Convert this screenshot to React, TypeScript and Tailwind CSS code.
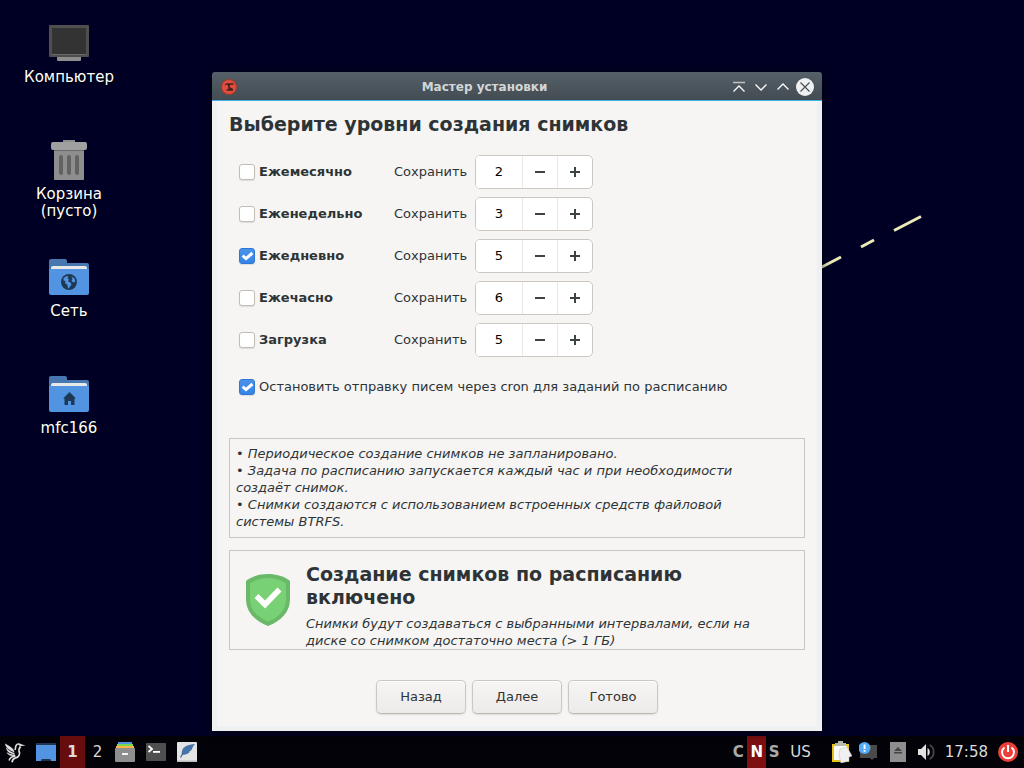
import { useState, type ReactNode } from 'react';

type Level = {
  id: string;
  label: string;
  enabled: boolean;
  keep: number;
};

const initialLevels: Level[] = [
  { id: 'monthly', label: 'Ежемесячно', enabled: false, keep: 2 },
  { id: 'weekly', label: 'Еженедельно', enabled: false, keep: 3 },
  { id: 'daily', label: 'Ежедневно', enabled: true, keep: 5 },
  { id: 'hourly', label: 'Ежечасно', enabled: false, keep: 6 },
  { id: 'boot', label: 'Загрузка', enabled: false, keep: 5 },
];

function Checkbox({ id, checked, onChange }: { id: string; checked: boolean; onChange: () => void }) {
  return (
    <span className="relative flex size-4 shrink-0">
      <input
        id={id}
        type="checkbox"
        checked={checked}
        onChange={onChange}
        className="peer size-4 appearance-none rounded-[3px] border border-[#c4bdb6] bg-white shadow-[0_1px_1px_rgba(0,0,0,0.1)] checked:border-[#2b77d6] checked:bg-linear-to-b checked:from-[#4b92e8] checked:to-[#3584e4]"
      />
      <svg viewBox="0 0 16 16" className="pointer-events-none absolute inset-0 hidden size-4 peer-checked:block">
        <path d="M3.6 7.6 7 10.600l6.400-5.600" fill="none" stroke="#fff" strokeWidth="3" />
      </svg>
    </span>
  );
}

function SpinBox({ id, value, onChange }: { id: string; value: number; onChange: (value: number) => void }) {
  return (
    <div className="flex h-[34px] w-[118px] overflow-hidden rounded-[5px] border border-[#cdc7c2] bg-white">
      <input
        id={id}
        type="text"
        value={value}
        onChange={(e) => onChange(Number(e.target.value) || 0)}
        className="w-[46px] min-w-0 bg-white pb-[2px] text-center text-black outline-none"
      />
      <button
        type="button"
        aria-label="Уменьшить"
        onClick={() => onChange(Math.max(0, value - 1))}
        className="flex w-[35px] items-center justify-center border-l border-[#ebe9e7]"
      >
        <svg viewBox="0 0 10 10" className="size-[10px]" shapeRendering="crispEdges">
          <path d="M0 4h10v2H0z" fill="#3d4345" />
        </svg>
      </button>
      <button
        type="button"
        aria-label="Увеличить"
        onClick={() => onChange(value + 1)}
        className="flex w-[35px] items-center justify-center border-l border-[#ebe9e7]"
      >
        <svg viewBox="0 0 10 10" className="size-[10px]" shapeRendering="crispEdges">
          <path d="M0 4h4V0h2v4h4v2H6v4H4V6H0z" fill="#3d4345" />
        </svg>
      </button>
    </div>
  );
}

function DesktopIcon({ label, children }: { label: ReactNode; children: ReactNode }) {
  return (
    <button
      type="button"
      className="flex h-[117px] w-full flex-col items-center text-[15px] leading-[17px] text-white [text-shadow:1px_1px_1px_#000]"
    >
      <svg viewBox="0 0 48 48" className="mb-1 size-12">
        {children}
      </svg>
      {label}
    </button>
  );
}

function Folder({ children }: { children: ReactNode }) {
  return (
    <g transform="translate(0 2)">
      <path d="M4 8a2 2 0 0 1 2-2h14a2 2 0 0 1 2 2v2h20a2 2 0 0 1 2 2v12H4z" fill="#4677b0" />
      <path d="M6 15a2 2 0 0 1 2-2h32a2 2 0 0 1 2 2v6H6z" fill="#e8e8e8" />
      <path d="M4 16h40v24a2 2 0 0 1-2 2H6a2 2 0 0 1-2-2z" fill="#5294e2" />
      {children}
    </g>
  );
}

function TitleBar() {
  return (
    <header className="flex h-[29px] items-center rounded-t-[3px] border-b border-[#3daee9] bg-linear-to-b from-[#566068] to-[#434c53] pt-px pr-2 pl-[9px]">
      <svg viewBox="0 0 16 16" className="size-4">
        <circle cx="8" cy="8" r="8" fill="#a3392d" />
        <circle cx="8" cy="8" r="7" fill="#e14d3d" />
        <path d="M3.500 6.500C3.800 4.800 5.500 4.300 7.500 4.300h5v1.500H9.300L8.500 8l3.500 1.800v2H5.500v-1.300l2-.8L6.800 6c-1.300-.3-2.300-.2-3.300.5z" fill="#43211f" />
      </svg>
      <h1 className="flex-1 pl-[2px] text-center text-[12px] font-bold text-[#d3d6d8]">Мастер установки</h1>
      <div className="flex items-center gap-1 text-[#fcfcfc]">
        <button type="button" aria-label="Свернуть в заголовок">
          <svg viewBox="0 0 18 18" className="size-[18px]" fill="none" stroke="currentColor">
            <path d="M3 4.500h12" stroke="#bfc3c5" strokeWidth="1.500" />
            <path d="M3.500 13.500 9 8l5.500 5.500" strokeWidth="1.300" />
          </svg>
        </button>
        <button type="button" aria-label="Свернуть">
          <svg viewBox="0 0 18 18" className="size-[18px]" fill="none" stroke="currentColor">
            <path d="M3.500 6.500 9 12l5.500-5.500" strokeWidth="1.300" />
          </svg>
        </button>
        <button type="button" aria-label="Развернуть">
          <svg viewBox="0 0 18 18" className="size-[18px]" fill="none" stroke="currentColor">
            <path d="M3.500 11.500 9 6l5.500 5.500" strokeWidth="1.300" />
          </svg>
        </button>
        <button type="button" aria-label="Закрыть">
          <svg viewBox="0 0 18 18" className="size-[18px]">
            <circle cx="9" cy="9" r="9" fill="#eff0f1" />
            <path d="m4.500 4.500 9 9m0-9-9 9" fill="none" stroke="#475057" strokeWidth="1.200" />
          </svg>
        </button>
      </div>
    </header>
  );
}

function WizardWindow() {
  const [levels, setLevels] = useState(initialLevels);
  const [stopCron, setStopCron] = useState(true);

  const update = (id: string, patch: Partial<Level>) =>
    setLevels((prev) => prev.map((l) => (l.id === id ? { ...l, ...patch } : l)));

  return (
    <section className="mt-[72px] mr-[202px] ml-[74px] min-w-0 flex-1 self-start rounded-t-[3px] shadow-[0_2px_10px_rgba(0,0,0,0.6)]">
      <TitleBar />
      <div className="border-[5px] border-t-0 border-[#eff0f1] bg-[#f6f5f4] px-3 pt-3 pb-3 text-[13px] leading-[17px] text-[#2e3436]">
        <h2 className="text-[19px] leading-[23px] font-bold">Выберите уровни создания снимков</h2>

        <div className="mt-[19px] flex flex-col gap-2 pl-[10px]">
          {levels.map((level) => (
            <div key={level.id} className="flex items-center">
              <div className="flex w-[155px] items-center gap-1">
                <Checkbox
                  id={level.id}
                  checked={level.enabled}
                  onChange={() => update(level.id, { enabled: !level.enabled })}
                />
                <label htmlFor={level.id} className="pb-[2px] font-bold">{level.label}</label>
              </div>
              <label htmlFor={`${level.id}-keep`} className="w-[81px] pb-[2px]">Сохранить</label>
              <SpinBox
                id={`${level.id}-keep`}
                value={level.keep}
                onChange={(keep) => update(level.id, { keep })}
              />
            </div>
          ))}
        </div>

        <div className="mt-[21px] flex items-center gap-1 pl-[10px]">
          <Checkbox id="stop-cron" checked={stopCron} onChange={() => setStopCron(!stopCron)} />
          <label htmlFor="stop-cron">Остановить отправку писем через cron для заданий по расписанию</label>
        </div>

        <div className="mt-[43px] min-h-[100px] border border-[#c6c6c5] p-[6px] pr-[50px] italic">
          <p>• Периодическое создание снимков не запланировано.</p>
          <p>• Задача по расписанию запускается каждый час и при необходимости создаёт снимок.</p>
          <p>• Снимки создаются с использованием встроенных средств файловой системы BTRFS.</p>
        </div>

        <div className="mt-3 flex min-h-[100px] items-center gap-4 border border-[#c6c6c5] pr-[36px] pl-4">
          <svg viewBox="0 0 44 52" className="h-[52px] w-11 shrink-0">
            <path d="M0 7C6 2 14 0 22 0s16 2 22 7v18c0 13-9 22-22 27C9 47 0 38 0 25z" fill="#69b969" />
            <path d="M4 9.500C9 6 15 4 22 4s13 2 18 5.500V25c0 11-7 18-18 22.500C11 43 4 36 4 25z" fill="#79d175" />
            <path d="m10.500 22 8.500 8.500L33.500 15.500" fill="none" stroke="#fff" strokeWidth="5.500" />
          </svg>
          <div className="pt-3">
            <h3 className="text-[19px] leading-[23px] font-bold">Создание снимков по расписанию включено</h3>
            <p className="mt-[6px] italic">
              Снимки будут создаваться с выбранными интервалами, если на диске со снимком достаточно места (&gt; 1 ГБ)
            </p>
          </div>
        </div>

        <div className="mt-[30px] flex justify-center gap-[6px]">
          {['Назад', 'Далее', 'Готово'].map((text) => (
            <button
              key={text}
              type="button"
              className="h-[34px] w-[90px] rounded-[5px] border border-[#cdc7c2] border-b-[#bfb8b1] bg-linear-to-b from-[#f6f5f4] to-[#edebe9] pb-[2px] shadow-[0_1px_2px_rgba(0,0,0,0.1),inset_0_1px_#fff]"
            >
              {text}
            </button>
          ))}
        </div>
      </div>
    </section>
  );
}

function Taskbar() {
  return (
    <footer className="flex h-8 items-center justify-between bg-[#020208] text-[15px] text-[#dcdcdc]">
      <div className="flex h-full items-center">
        <button type="button" aria-label="Меню" className="ml-1">
          <svg viewBox="0 0 22 22" className="size-[22px]" fill="none" stroke="#dcdcdc">
            <path d="M11 9c.8-1.800.2-3.400 1.200-4.800 1-1.500 3-1.600 4-.2" strokeWidth="1.600" />
            <path d="m15 2.500 6.500 2-6 .8z" fill="#dcdcdc" stroke="none" />
            <path d="M16.500 5.500c-.8 1.500-2 2.500-1.500 4.500 1.800 3.500-.5 6.500-4 7.200-2 .6-2.500 1.800-3 4" strokeWidth="1.800" />
            <path d="M10.500 11.500C10 7 6 5.500 1 2.500c.2 3.500 3.500 6.500 9.500 9z" fill="#dcdcdc" stroke="none" />
            <path d="M10.500 12C7.500 11 4.500 9.500 2 6.500c.5 4 3.500 6 8.500 7z" fill="#dcdcdc" stroke="none" />
            <path d="M11 13.500C8 13.500 5 13 2.500 11c1 3 4 4.500 8.500 4z" fill="#dcdcdc" stroke="none" />
            <path d="M11.500 15c-3 .3-5.500 1.200-6.500 4.500" strokeWidth="1.500" />
          </svg>
        </button>
        <button type="button" aria-label="Показать рабочий стол" className="ml-[10px]">
          <svg viewBox="0 0 20 20" className="size-5">
            <path d="M0 1h20v18H0z" fill="#5294e2" />
            <path d="M0 1h20v2H0zM5 19v-1l1-1h8l1 1v1z" fill="#20344f" />
          </svg>
        </button>
        <button type="button" className="ml-1 h-full w-[25px] bg-[#680d0d] font-bold">1</button>
        <button type="button" className="h-full w-[25px]">2</button>
        <div className="ml-[5px] flex items-center gap-[11px]">
          <button type="button" aria-label="Файловый менеджер">
            <svg viewBox="0 0 20 20" className="size-5">
              <path d="M3 0h14v3H3z" fill="#5294e2" />
              <path d="M2 2h16v3H2z" fill="#7ad64f" />
              <path d="M1 4h18v3H1z" fill="#fbb445" />
              <rect y="6" width="20" height="14" rx="1" fill="#8e8e8e" />
              <path d="M7 11h6v2H7z" fill="#f5f5f5" />
            </svg>
          </button>
          <button type="button" aria-label="Терминал">
            <svg viewBox="0 0 20 20" className="size-5">
              <rect y="1" width="20" height="18" rx="1" fill="#4f4f4f" />
              <path d="m2.500 4 3.500 3-3.500 3" fill="none" stroke="#fff" strokeWidth="1.800" />
              <path d="M7 9h7v1.800H7z" fill="#fff" />
            </svg>
          </button>
          <button type="button" aria-label="Текстовый редактор">
            <svg viewBox="0 0 20 20" className="size-5">
              <rect width="20" height="20" rx="1" fill="#e4e4e4" />
              <path d="M0 18.500h20V19a1 1 0 0 1-1 1H1a1 1 0 0 1-1-1z" fill="#bdbdbd" />
              <path d="M18 2C11 2.500 6 4.500 5 9c-.3 1.500-.3 2.500-.2 3.500C8 13 12 12 13 9.500l-1-.3 2.200-.7C15.500 6 16 4 18 2z" fill="#4674a8" />
              <path d="m5.800 11.500-2.300 4" fill="none" stroke="#38618f" strokeWidth="1.200" />
            </svg>
          </button>
        </div>
      </div>

      <div className="flex h-full items-center pr-[6px]">
        <span className="w-[18px] text-center font-bold text-[#aaa]">C</span>
        <span className="flex h-full w-[19px] items-center justify-center bg-[#7d0f0f] font-bold text-white">N</span>
        <span className="w-4 text-center font-bold text-[#aaa]">S</span>
        <span className="ml-2">US</span>
        <svg viewBox="0 0 20 22" className="ml-[21px] h-[22px] w-5">
          <path d="M0 3h17v18H0z" fill="#e5c21c" />
          <path d="M2 5h13v14H2z" fill="#fafafa" />
          <path d="M3 2h3V0h5v2h3v3H3z" fill="#b8b8ae" />
          <path d="m8 8 7-2 5 9-3 1v4l-8 2-2-8z" fill="#f0f0f0" stroke="#c6c6c6" strokeWidth=".6" />
        </svg>
        <svg viewBox="0 0 20 20" className="ml-[7px] size-5">
          <path d="M3 3h15v13h-3l-2 2-2-2H1V5z" fill="#4a4a4a" />
          <circle cx="5.500" cy="6" r="6" fill="#55aaf5" />
          <path d="M4.600 2.500h1.900v4.500H4.600zM4.600 8h1.900v1.800H4.600z" fill="#fff" />
        </svg>
        <svg viewBox="0 0 16 20" className="ml-[11px] h-5 w-4">
          <path d="M0 0h16v20H0z" fill="#8e8e8e" />
          <path d="m8 5 4 4H4zM4 10h8v1.500H4z" fill="#444" />
        </svg>
        <svg viewBox="0 0 18 18" className="ml-3 size-[18px]">
          <path d="M0 6h3l5-5v16l-5-5H0z" fill="#e2e2e2" />
          <path d="M9.500 5c3 1.500 3 6.500 0 8z" fill="#e2e2e2" />
          <path d="M11.500 2c5.500 2.500 5.500 11.500 0 14" fill="none" stroke="#46464a" strokeWidth="1.800" />
        </svg>
        <time className="ml-[9px]">17:58</time>
        <button type="button" aria-label="Выключить" className="ml-[10px]">
          <svg viewBox="0 0 20 20" className="size-5">
            <circle cx="10" cy="10" r="10" fill="#ec3f3a" />
            <path d="M6.500 5.500a6 6 0 1 0 7 0M10 3v7" fill="none" stroke="#fff" strokeWidth="2" />
          </svg>
        </button>
      </div>
    </footer>
  );
}

export default function App() {
  return (
    <div className="relative flex min-h-screen flex-col bg-[#000024] font-['DejaVu_Sans',sans-serif]">
      {/* Wallpaper strokes */}
      <svg viewBox="0 0 110 60" className="absolute top-[212px] left-[818px] h-[60px] w-[110px]">
        <path d="m1 56.500 22-11.500M43 35l13-7M76 18.500l27-14" fill="none" stroke="#ece9b8" strokeWidth="3" />
      </svg>

      <main className="relative flex flex-1 pb-[5px]">
        <nav className="w-[138px] shrink-0 pt-[17px]">
          <DesktopIcon label="Компьютер">
            <rect x="4" y="8" width="40" height="32" rx="1" fill="#4f4f4f" />
            <path d="M7 11h34v26H7z" fill="#333" />
            <path d="M7 37h34v1H7z" fill="#6a6a6a" />
            <path d="M12 40h24v3a1 1 0 0 1-1 1H13a1 1 0 0 1-1-1z" fill="#8e8e8e" />
          </DesktopIcon>
          <DesktopIcon label={<span>Корзина<br />(пусто)</span>}>
            <path d="M18 6h12v3H18z" fill="#8e8e8e" />
            <path d="M9 14h30v31a1 1 0 0 1-1 1H10a1 1 0 0 1-1-1z" fill="#8e8e8e" />
            <path d="M9 16h30v1H9z" fill="#6a6a6a" />
            <rect x="6" y="8" width="36" height="8" rx="2" fill="#a0a0a0" />
            <path d="M16 23v16M24 23v16M32 23v16" stroke="#636363" strokeWidth="4" strokeLinecap="round" />
          </DesktopIcon>
          <DesktopIcon label="Сеть">
            <Folder>
              <circle cx="24" cy="29" r="8" fill="#1e3954" />
              <path d="M18.500 25.500c1-1.300 2-2 3.500-2.500l1.500 1-1 1.500 1.500 1-1 2 2.500 1 1 2-2 3-1.500 1-.5-3.500-2.500-2 .5-2-2-.5zM26.500 23.500l3 2 .8 3-1.800 1-2-1.500 1-2z" fill="#5294e2" />
            </Folder>
          </DesktopIcon>
          <DesktopIcon label="mfc166">
            <Folder>
              <path d="M24.500 22 31 28.500h-1.500V35H26v-4h-3v4h-3.500v-6.500H18z" fill="#1e3954" />
            </Folder>
          </DesktopIcon>
        </nav>
        <WizardWindow />
      </main>

      <Taskbar />
    </div>
  );
}
